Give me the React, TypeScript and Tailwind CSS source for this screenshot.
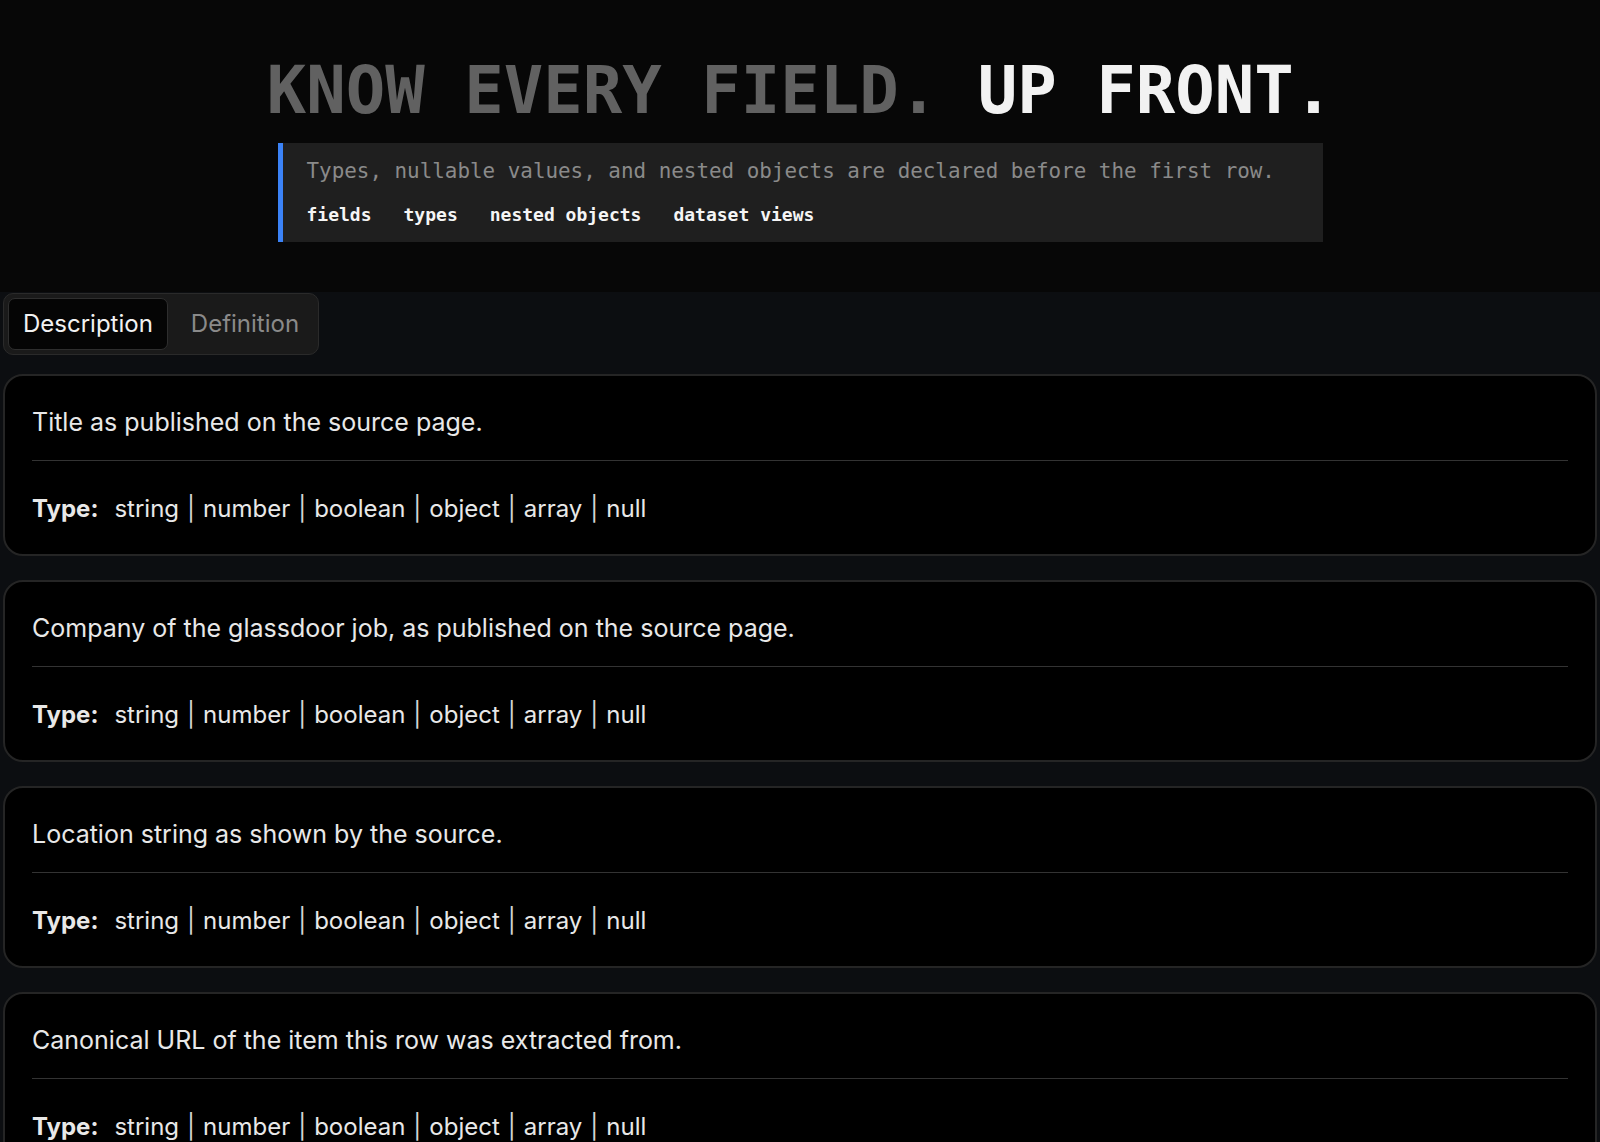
const fields = [
  'Title as published on the source page.',
  'Company of the glassdoor job, as published on the source page.',
  'Location string as shown by the source.',
  'Canonical URL of the item this row was extracted from.',
  'Salary range text as displayed on the listing.',
  'Date the listing was first seen by the crawler.',
];

const types = ['string', 'number', 'boolean', 'object', 'array', 'null'];
const tags = ['fields', 'types', 'nested objects', 'dataset views'];

function FieldCard({ text }: { text: string }) {
  return (
    <div className="rounded-[20px] border-2 border-[#252525] bg-black px-[27px] pt-[28px] pb-[25px]">
      <p className="text-[25px] leading-9 text-[#e8e8e8]">{text}</p>
      <div className="mt-5 mb-[28px] h-px bg-[#333333]" />
      <div className="flex h-10 items-center text-[24px] text-[#e8e8e8]">
        <span className="font-bold">Type:</span>
        <span className="ml-[16px] flex items-center">
          {types.map((t, i) => (
            <span key={t} className="flex items-center">
              {i > 0 && <span className="mx-[8px] text-[#d4d4d4]">|</span>}
              {t}
            </span>
          ))}
        </span>
      </div>
    </div>
  );
}

export default function App() {
  return (
    <div className="min-h-screen bg-[#0c0e11]">
      <header className="bg-[#070707] pt-[57px] pb-[50px]" style={{ fontFamily: '"DejaVu Sans Mono", monospace' }}>
        <h1 className="text-center text-[65.6px] font-bold leading-[66px]">
          <span className="text-[#616161]">KNOW EVERY FIELD.</span>{' '}
          <span className="text-[#f2f2f2]">UP FRONT.</span>
        </h1>
        <div className="mx-auto mt-5 flex w-[1045px] flex-col gap-4 border-l-[5px] border-[#3b82f6] bg-[#1f1f1f] pt-3 pb-[15px] pl-6">
          <p className="text-[20.9px] leading-8 text-[#8a8a8a]">
            Types, nullable values, and nested objects are declared before the first row.
          </p>
          <div className="flex gap-8 text-[18px] font-bold leading-6 text-[#f5f5f5]">
            {tags.map((t) => (
              <span key={t}>{t}</span>
            ))}
          </div>
        </div>
      </header>

      <main className="px-[3px] pt-px pb-10" style={{ fontFamily: 'Inter, "Noto Sans", sans-serif' }}>
        <div className="inline-flex gap-[8px] rounded-[10px] border border-[#2a2a2a] bg-[#1a1a1a] p-[4px]">
          <button className="h-[52px] rounded-[7px] border border-[#2e2e2e] bg-[#050505] px-[14px] text-[24px] text-[#f2f2f2]">
            Description
          </button>
          <button className="h-[52px] rounded-[7px] border border-transparent px-[14px] text-[24px] text-[#8a8a8a]">
            Definition
          </button>
        </div>

        <div className="mt-[19px] flex flex-col gap-6">
          {fields.map((f) => (
            <FieldCard key={f} text={f} />
          ))}
        </div>
      </main>
    </div>
  );
}
